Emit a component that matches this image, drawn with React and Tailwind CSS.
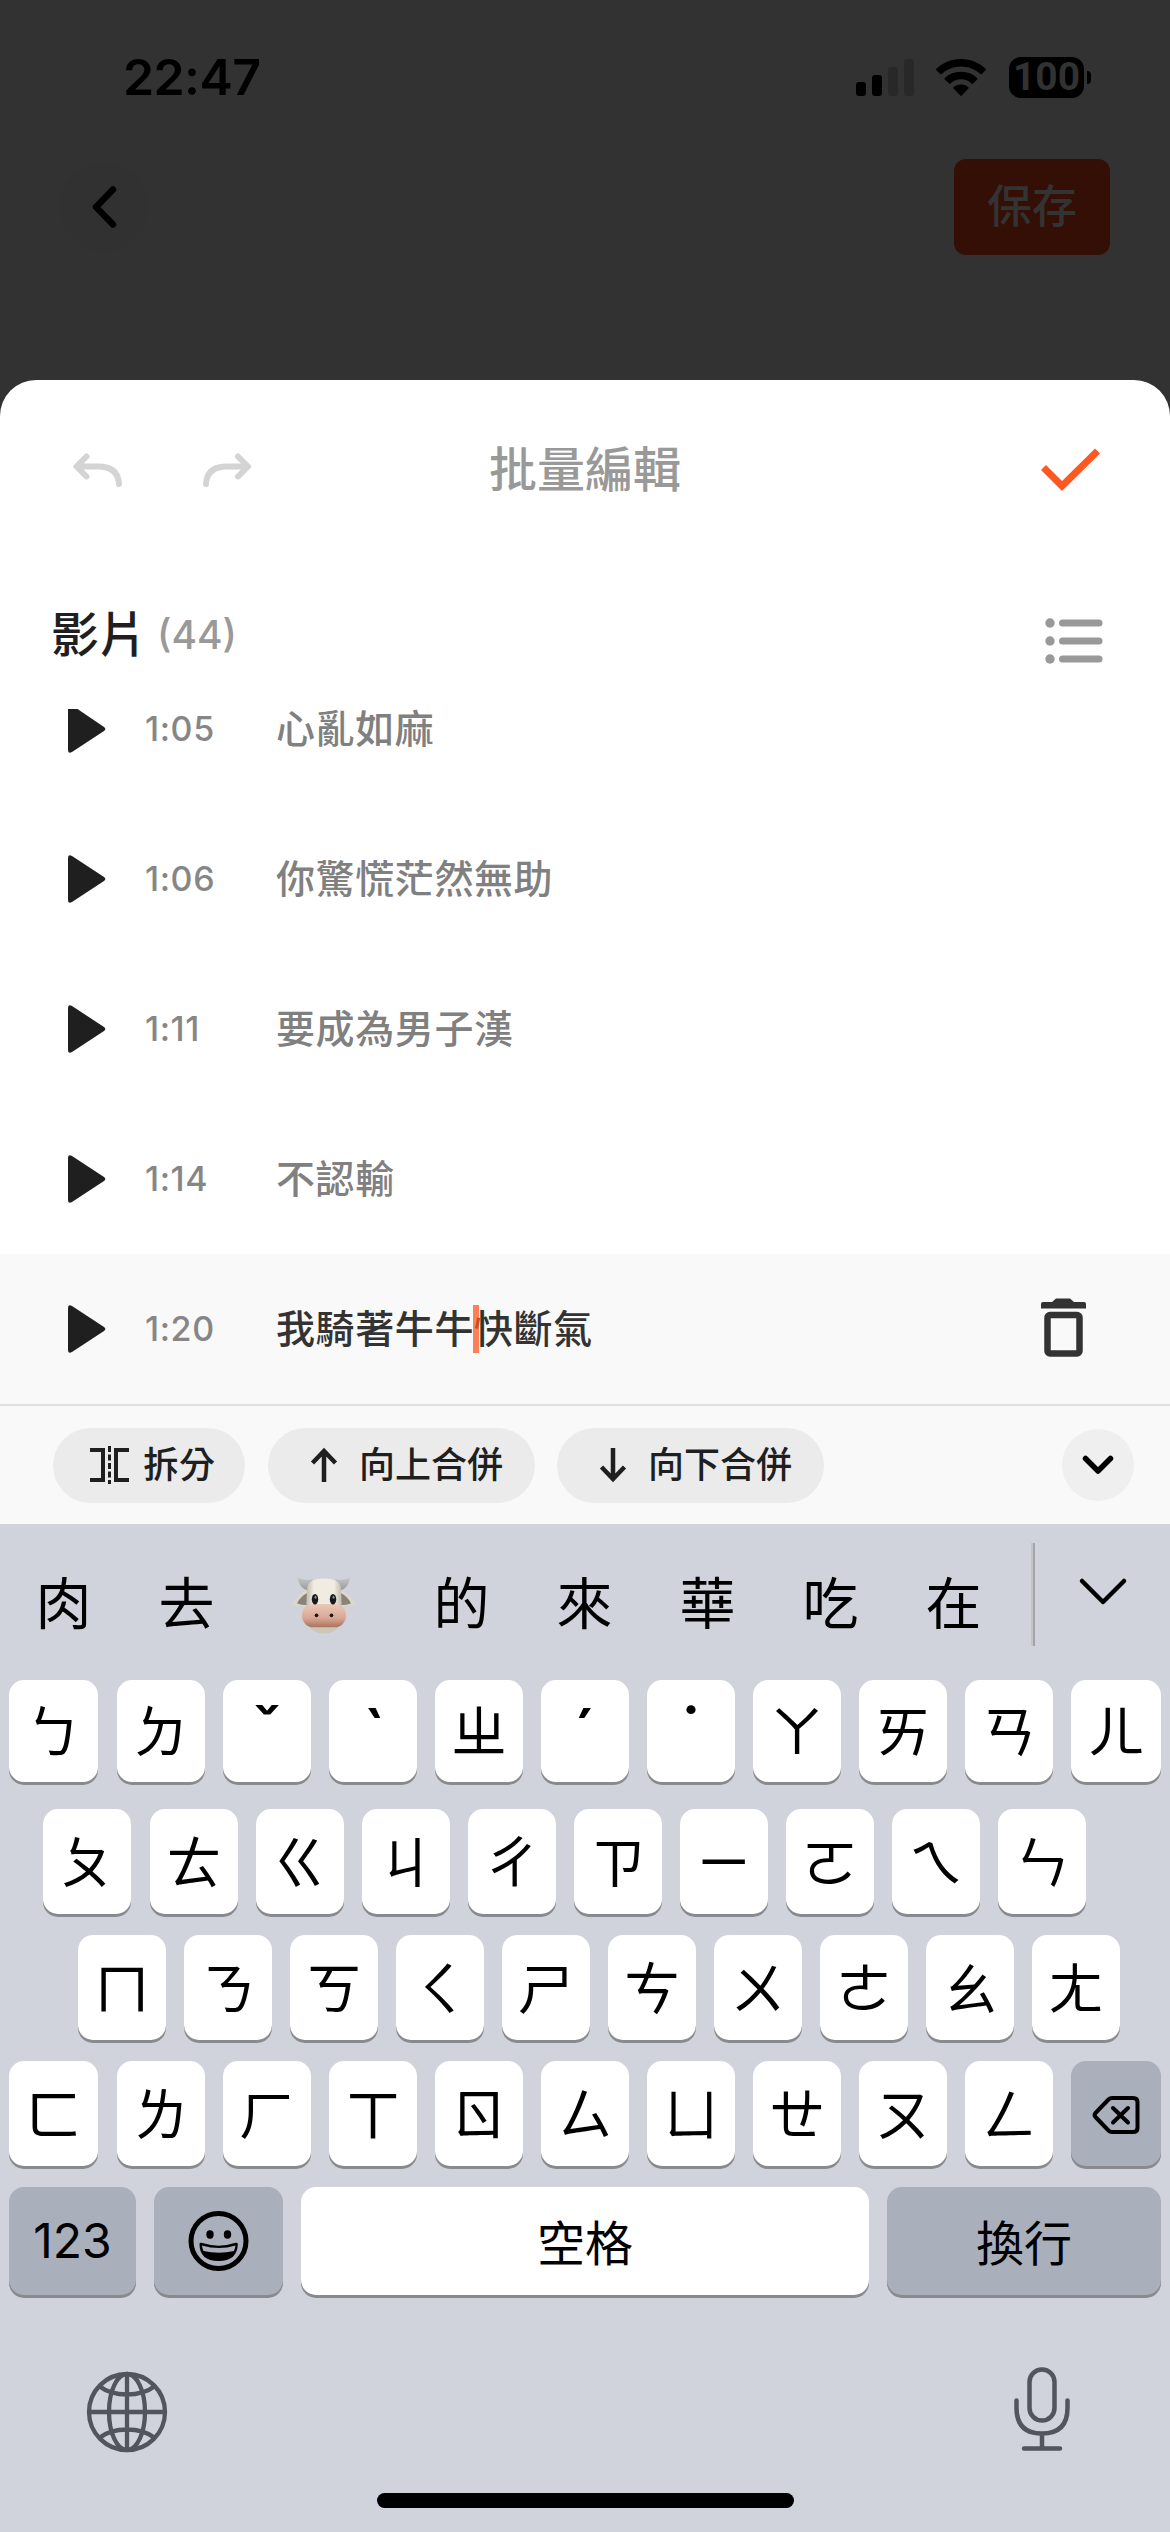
const CJK = 'font-["Inter","Noto_Sans_CJK_TC",sans-serif]';

function Play({ clipped }) {
  return (
    <svg className="absolute left-[68px] top-[51px] h-12 w-[38px]" viewBox="0 0 38 48">
      <path
        d={clipped
          ? "M0 4H9.5L36 22Q38.6 24 36 26L4 47Q0 49.500 0 44.500Z"
          : "M0 3.500Q0-1.500 4 1L36 22Q38.600 24 36 26L4 47Q0 49.500 0 44.500Z"}
        fill="#1f1f1f"
      />
    </svg>
  );
}

const rows = [
  { time: "1:05", text: "心亂如麻", clipped: true },
  { time: "1:06", text: "你驚慌茫然無助" },
  { time: "1:11", text: "要成為男子漢" },
  { time: "1:14", text: "不認輸" },
  { time: "1:20", text: "我騎著牛牛快斷氣", active: true },
];

function Row({ time, text, clipped, active }) {
  return (
    <div className={"relative flex h-[150px] shrink-0 items-center pl-[145px] " + (active ? "bg-[#f9f9f9]" : "")}>
      <Play clipped={clipped} />
      <span className="w-[131px] text-[34px] leading-[48px] font-[450] tracking-[0.6px] text-[#868686]">{time}</span>
      <span className={"text-[39px] leading-[48px] font-medium tracking-[0.6px] " + (active ? "text-[#333]" : "text-[#808080]")}>{text}</span>
      {active && (
        <>
          <i className="absolute left-[473px] top-[51px] h-12 w-[6px] bg-[#ff5722]/75" />
          <svg className="absolute left-[1041px] top-[44px] h-[60px] w-[45px]" viewBox="0 0 45 60" fill="none">
            <path d="M2 4H11L15 .5H29L33 4H43Q45 4 45 6V10.500H0V6Q0 4 2 4Z" fill="#333" />
            <rect x="6.500" y="17" width="32" height="38.500" rx="2.500" stroke="#333" strokeWidth="6.500" />
          </svg>
        </>
      )}
    </div>
  );
}

function StatusBar() {
  return (
    <div className="flex h-[118px] items-start pl-[123px] pr-[79px]">
      <span className="mt-[46px] text-[50px] leading-[62px] font-semibold tracking-[-0.6px]">22:47</span>
      <div className="mt-[57px] ml-auto flex h-[42px] items-start">
        <svg className="mt-[2px] h-[38px] w-[59px]" viewBox="0 0 59 38">
          <rect x="0" y="23" width="10" height="14" rx="3" />
          <rect x="16" y="16" width="10" height="21" rx="3" />
          <rect x="32" y="8" width="10" height="29" rx="3" fill="#282828" />
          <rect x="48" y="0" width="10" height="37" rx="3" fill="#282828" />
        </svg>
        <svg className="mt-[2px] ml-[21px] h-[37px] w-[50px]" viewBox="0 0 50 37">
          <path d="M25 0C35 0 43.500 4 49.600 9.800Q50.200 10.500 49.600 11.200L45.700 15Q45 15.700 44.300 15C39.200 10.200 32 7.500 25 7.500S10.800 10.200 5.700 15Q5 15.700 4.300 15L.4 11.200Q-.2 10.500 .4 9.800C6.500 4 15 0 25 0Z" />
          <path d="M25 12.800C31.500 12.800 37 15 41.200 19Q41.900 19.700 41.200 20.400L37 24.400Q36.300 25 35.600 24.400C32.800 21.900 29 20.300 25 20.300S17.200 21.900 14.400 24.400Q13.700 25 13 24.400L8.800 20.400Q8.100 19.700 8.800 19C13 15 18.500 12.800 25 12.800Z" />
          <path d="M25 25.500C28 25.500 30.500 26.500 32.400 28.200Q33 28.900 32.400 29.600L25.700 36.400Q25 37.100 24.300 36.400L17.600 29.600Q17 28.900 17.600 28.200C19.500 26.500 22 25.500 25 25.500Z" />
        </svg>
        <div className="ml-[23px] flex h-[41px] w-[75px] items-center justify-center rounded-[12px] bg-black font-['Roboto'] text-[39px] leading-[41px] font-bold text-[#323232]">100</div>
        <i className="mt-[14px] ml-[3px] h-[13px] w-[4px] rounded-r-full bg-black" />
      </div>
    </div>
  );
}

function Pill({ icon, label, cls }) {
  return (
    <div className={"flex h-[75px] items-center rounded-full bg-[#ebebeb] " + cls}>
      {icon}
      <span className="-mt-[1px] text-[36px] leading-[50px] font-medium text-[#1f1f1f]">{label}</span>
    </div>
  );
}

const stroke = { fill: "none", stroke: "#1f1f1f", strokeWidth: 4.5 };

function Key({ children, cls = "" }) {
  return (
    <div className={"flex items-center justify-center rounded-[15px] shadow-[0_3px_0_#888a8e] " + cls}>
      {children}
    </div>
  );
}

const tones = {
  "ˇ": "pt-[2px]",
  "ˋ": "pt-[8px]",
  "ˊ": "pt-[8px]",
  "˙": "pt-[2px]",
};

function KeyRow({ keys, cls, first = "", last = "", children }) {
  return (
    <div className={"flex gap-[18px] " + cls}>
      {keys.map((c, i) => (
        <Key key={c} cls={"bg-white " + (i === 0 && first ? first : i === 10 && last ? last : "w-[88px]")}>
          <span className={tones[c] ? "text-[68px] leading-[100px] font-medium " + tones[c] : "pt-[2px] text-[56px] leading-[100px]"}>{c}</span>
        </Key>
      ))}
      {children}
    </div>
  );
}

function Cow() {
  return (
    <svg className="h-[58px] w-[62px]" viewBox="0 0 62 56" preserveAspectRatio="none">
      <defs>
        <linearGradient id="muzzle" x1="0" y1="0" x2="0" y2="1"><stop offset="0" stopColor="#ecc8b8" /><stop offset="0.600" stopColor="#d9a894" /><stop offset="1" stopColor="#a97460" /></linearGradient>
        <linearGradient id="face" x1="0" y1="0" x2="1" y2="0"><stop offset="0" stopColor="#bdb8ac" /><stop offset="0.220" stopColor="#f0ece1" /><stop offset="0.780" stopColor="#f0ece1" /><stop offset="1" stopColor="#bdb8ac" /></linearGradient>
        <linearGradient id="horn" x1="0" y1="0" x2="0" y2="1"><stop offset="0" stopColor="#c9cacb" /><stop offset="1" stopColor="#96989b" /></linearGradient>
      </defs>
      <path d="M4.500 0Q10 4 20 2.500L15 13Q6 11 4.500 0Z" fill="url(#horn)" />
      <path d="M57 0Q51 4 42 2.500L47 13Q56 11 57 0Z" fill="url(#horn)" />
      <path d="M15 12Q5 16 0 26.500Q8 29.500 16 28Z" fill="#ded8ca" />
      <path d="M15 15Q7 19 4 25.500Q10 27.500 15 27Z" fill="#8a8378" />
      <path d="M47 12Q57 16 62 26.500Q54 29.500 46 28Z" fill="#ded8ca" />
      <path d="M47 15Q55 19 58 25.500Q52 27.500 47 27Z" fill="#8a8378" />
      <ellipse cx="31" cy="47" rx="14" ry="7.500" fill="#cdc7b9" />
      <path d="M14 12Q14 1.500 31 1.500T48 12L49 33H13Z" fill="url(#face)" />
      <rect x="9" y="26" width="44" height="22.500" rx="11" fill="url(#muzzle)" />
      <ellipse cx="22" cy="21.500" rx="3.200" ry="5" fill="#17191c" />
      <ellipse cx="40" cy="21.500" rx="3.200" ry="5" fill="#17191c" />
      <ellipse cx="22.500" cy="19.500" rx="1" ry="1.500" fill="#8b8d90" />
      <ellipse cx="40.500" cy="19.500" rx="1" ry="1.500" fill="#8b8d90" />
      <circle cx="23.500" cy="37" r="1.800" fill="#1c1512" />
      <circle cx="38.500" cy="37" r="1.800" fill="#1c1512" />
    </svg>
  );
}

function Keyboard() {
  return (
    <div className="h-[1008px] bg-[#d0d3dc] text-black">
      <div className="flex h-[156px] items-start">
        <div className="flex pt-[40px] pl-[2px] text-[56px] leading-[80px]">
          {["肉", "去", "cow", "的", "來", "華", "吃", "在"].map((c) =>
            c === "cow" ? (
              <div key={c} className="flex w-[152px] items-center justify-center pt-[3px]"><Cow /></div>
            ) : (
              <span key={c} className="w-[123px] text-center">{c}</span>
            ),
          )}
        </div>
        <i className="mt-[19px] ml-[16px] h-[103px] w-[4px] border-r-2 border-[#a3a5a9] bg-[#c3c5c9]" />
        <svg className="mt-[51px] ml-[43px] h-[32px] w-[50px]" viewBox="0 0 50 32" fill="none" stroke="#000" strokeWidth="4.500" strokeLinecap="round" strokeLinejoin="round"><path d="M4 6L25 27L46 6" /></svg>
      </div>
      <div className="flex flex-col">
        <KeyRow cls="h-[102px] pl-[9px]" first="mr-px w-[89px]" last="w-[90px]" keys={[..."ㄅㄉˇˋㄓˊ˙ㄚㄞㄢㄦ"]} />
        <KeyRow cls="mt-[27px] h-[105px] pl-[43px]" first="mr-px w-[88px]" keys={[..."ㄆㄊㄍㄐㄔㄗㄧㄛㄟㄣ"]} />
        <KeyRow cls="mt-[21px] h-[105px] pl-[78px]" keys={[..."ㄇㄋㄎㄑㄕㄘㄨㄜㄠㄤ"]} />
        <KeyRow cls="mt-[21px] h-[105px] pl-[9px]" first="mr-px w-[89px]" keys={[..."ㄈㄌㄏㄒㄖㄙㄩㄝㄡㄥ"]}>
          <Key cls="w-[90px] bg-[#a9afbb]">
            <svg className="mt-[2px] h-[40px] w-[48px]" viewBox="0 0 48 40" fill="none" stroke="#000" strokeWidth="4" strokeLinecap="round" strokeLinejoin="round">
              <path d="M20 3H41Q45.500 3 45.500 7V33Q45.500 37 41 37H20Q18 37 16.500 35.500L3.500 22Q1.500 20 3.500 18L16.500 4.500Q18 3 20 3ZM21 13L36 27.500M36 13L21 27.500" />
            </svg>
          </Key>
        </KeyRow>
        <div className="mt-[21px] flex h-[108px] gap-[18px] pl-[9px] text-[48px]">
          <Key cls="w-[127px] bg-[#a9afbb]">123</Key>
          <Key cls="w-[129px] bg-[#a9afbb]">
            <svg className="h-[62px] w-[62px]" viewBox="0 0 62 62">
              <circle cx="30.500" cy="31" r="27.500" fill="none" stroke="#000" strokeWidth="5" />
              <ellipse cx="22" cy="24.500" rx="3.700" ry="4.200" />
              <ellipse cx="39.500" cy="24.500" rx="3.700" ry="4.200" />
              <path d="M11.500 34Q11.500 32.500 13.500 32.800Q31 38.500 47.500 32.800Q49.800 32.300 49.800 34Q49.500 51 30.500 51T11.500 34Z" />
              <path d="M14 35.500Q31 40.500 47.500 35.500Q47 38.500 46 41Q31 44.500 15.500 41Q14.300 38.500 14 35.500Z" fill="#a9afbb" />
            </svg>
          </Key>
          <Key cls="w-[568px] bg-white"><span className="pt-[6px]">空格</span></Key>
          <Key cls="w-[274px] bg-[#a9afbb]"><span className="pt-[6px]">換行</span></Key>
        </div>
      </div>
      <div className="mt-[71px] flex h-[88px] items-center justify-between pr-[99px] pl-[86px]">
        <svg className="mt-[4px] h-[82px] w-[82px]" viewBox="0 0 82 82" fill="none" stroke="#50555e" strokeWidth="4.300">
          <circle cx="41" cy="41" r="38" />
          <ellipse cx="41" cy="41" rx="18" ry="38" />
          <path d="M41 3V79M3 41H79M13 15Q24 23.500 41 23.500T69 15M13 67Q24 58.500 41 58.500T69 67" />
        </svg>
        <svg className="-mt-[2px] h-[86px] w-[58px]" viewBox="0 0 58 86" fill="none" stroke="#50555e" strokeWidth="4.500" strokeLinecap="round">
          <rect x="16.500" y="3.500" width="25" height="51" rx="12.500" />
          <path d="M3.500 34.500V42Q3.500 67.500 29 67.500T54.500 42V34.500M29 67.500V82M11 82.500H47" />
        </svg>
      </div>
      <div className="mt-[39px] ml-[377px] h-[15px] w-[417px] rounded-full bg-black" />
    </div>
  );
}

export default function App() {
  return (
    <div className={"flex h-[2532px] w-[1170px] flex-col overflow-hidden bg-[#323232] text-black " + CJK} lang="zh-Hant">
      <StatusBar />
      <div className="flex h-[262px] items-start justify-between pt-[41px] pr-[60px] pl-[60px]">
        <div className="mt-[4px] flex size-[88px] items-center justify-center rounded-full bg-[#313131]">
          <svg className="h-[44px] w-[28px]" viewBox="0 0 28 44" fill="none" stroke="#000" strokeWidth="6.500" strokeLinecap="round" strokeLinejoin="round"><path d="M23 4.500L6 22L23 39.500" /></svg>
        </div>
        <div className="flex h-[96px] w-[156px] items-center justify-center rounded-[12px] bg-[#330f05] text-[45px] font-medium text-[#333]">保存</div>
      </div>
      <div className="flex h-[1144px] shrink-0 flex-col overflow-hidden rounded-t-[36px] bg-white">
        <div className="flex h-[180px] shrink-0 items-center pl-[72px]">
          <svg className="h-[36px] w-[52px]" viewBox="0 0 52 36" fill="none" stroke="#d4d4d4" strokeWidth="6" strokeLinecap="round" strokeLinejoin="round"><path d="M14.500 4.500L4.500 14.500L14.500 24.500M5.500 14.500H26Q46 14.500 47 32" /></svg>
          <svg className="ml-[77px] h-[36px] w-[52px]" viewBox="0 0 52 36" fill="none" stroke="#d4d4d4" strokeWidth="6" strokeLinecap="round" strokeLinejoin="round"><path d="M37 4.500L47 14.500L37 24.500M46 14.500H26Q6 14.500 5 32" /></svg>
          <h1 className="-mt-[1px] ml-[236px] text-[48px] leading-[60px] font-medium text-[#999]">批量編輯</h1>
          <svg className="ml-[360px] h-[44px] w-[60px]" viewBox="0 0 60 44" fill="none" stroke="#ff5722" strokeWidth="7" strokeLinejoin="miter"><path d="M2.500 19.500L21 38L56.500 3" /></svg>
        </div>
        <div className="flex h-[149px] shrink-0 items-center pl-[51px]">
          <h2 className="text-[48px] leading-[60px] font-medium text-[#1f1f1f]">影片</h2>
          <span className="mt-px ml-[10px] text-[39px] font-[450] text-[#999]">(44)</span>
          <svg className="mt-[13px] ml-auto mr-[67px] h-[46px] w-[58px]" viewBox="0 0 58 46" fill="#999">
            {[5, 23, 41].map((y) => (
              <g key={y}><circle cx="5" cy={y} r="4.700" /><rect x="14" y={y - 3.5} width="43.500" height="7" rx="3.500" /></g>
            ))}
          </svg>
        </div>
        <div className="-mt-[55px] flex flex-col">
          {rows.map((r) => <Row key={r.time} {...r} />)}
        </div>
        <div className="flex h-[120px] shrink-0 items-center border-t-2 border-[#e0e0e0] bg-[#f9f9f9] pl-[53px]">
          <Pill cls="w-[192px] pl-[37px] gap-[14px]" label="拆分" icon={
            <svg className="h-[38px] w-[39px]" viewBox="0 0 39 38" {...stroke} strokeWidth="4">
              <path d="M0 4H13V34H0M39 4H26V34H39" /><path d="M19.500 0V38" strokeWidth="3" strokeDasharray="6 2.500" />
            </svg>} />
          <Pill cls="ml-[23px] w-[267px] pl-[42px] gap-[21px]" label="向上合併" icon={
            <svg className="h-[36px] w-[28px]" viewBox="0 0 28 36" {...stroke}><path d="M14 35V4M2.500 16L14 4L25.500 16" /></svg>} />
          <Pill cls="ml-[22px] w-[267px] pl-[42px] gap-[21px]" label="向下合併" icon={
            <svg className="h-[36px] w-[28px]" viewBox="0 0 28 36" {...stroke}><path d="M14 1V32M2.500 20L14 32L25.500 20" /></svg>} />
          <div className="ml-[238px] flex size-[72px] items-center justify-center rounded-full bg-[#efefef]">
            <svg className="h-[20px] w-[32px]" viewBox="0 0 32 20" fill="none" stroke="#000" strokeWidth="5.500" strokeLinecap="round" strokeLinejoin="round"><path d="M3.500 3.500L16 16L28.500 3.500" /></svg>
          </div>
        </div>
      </div>
      <Keyboard />
    </div>
  );
}
